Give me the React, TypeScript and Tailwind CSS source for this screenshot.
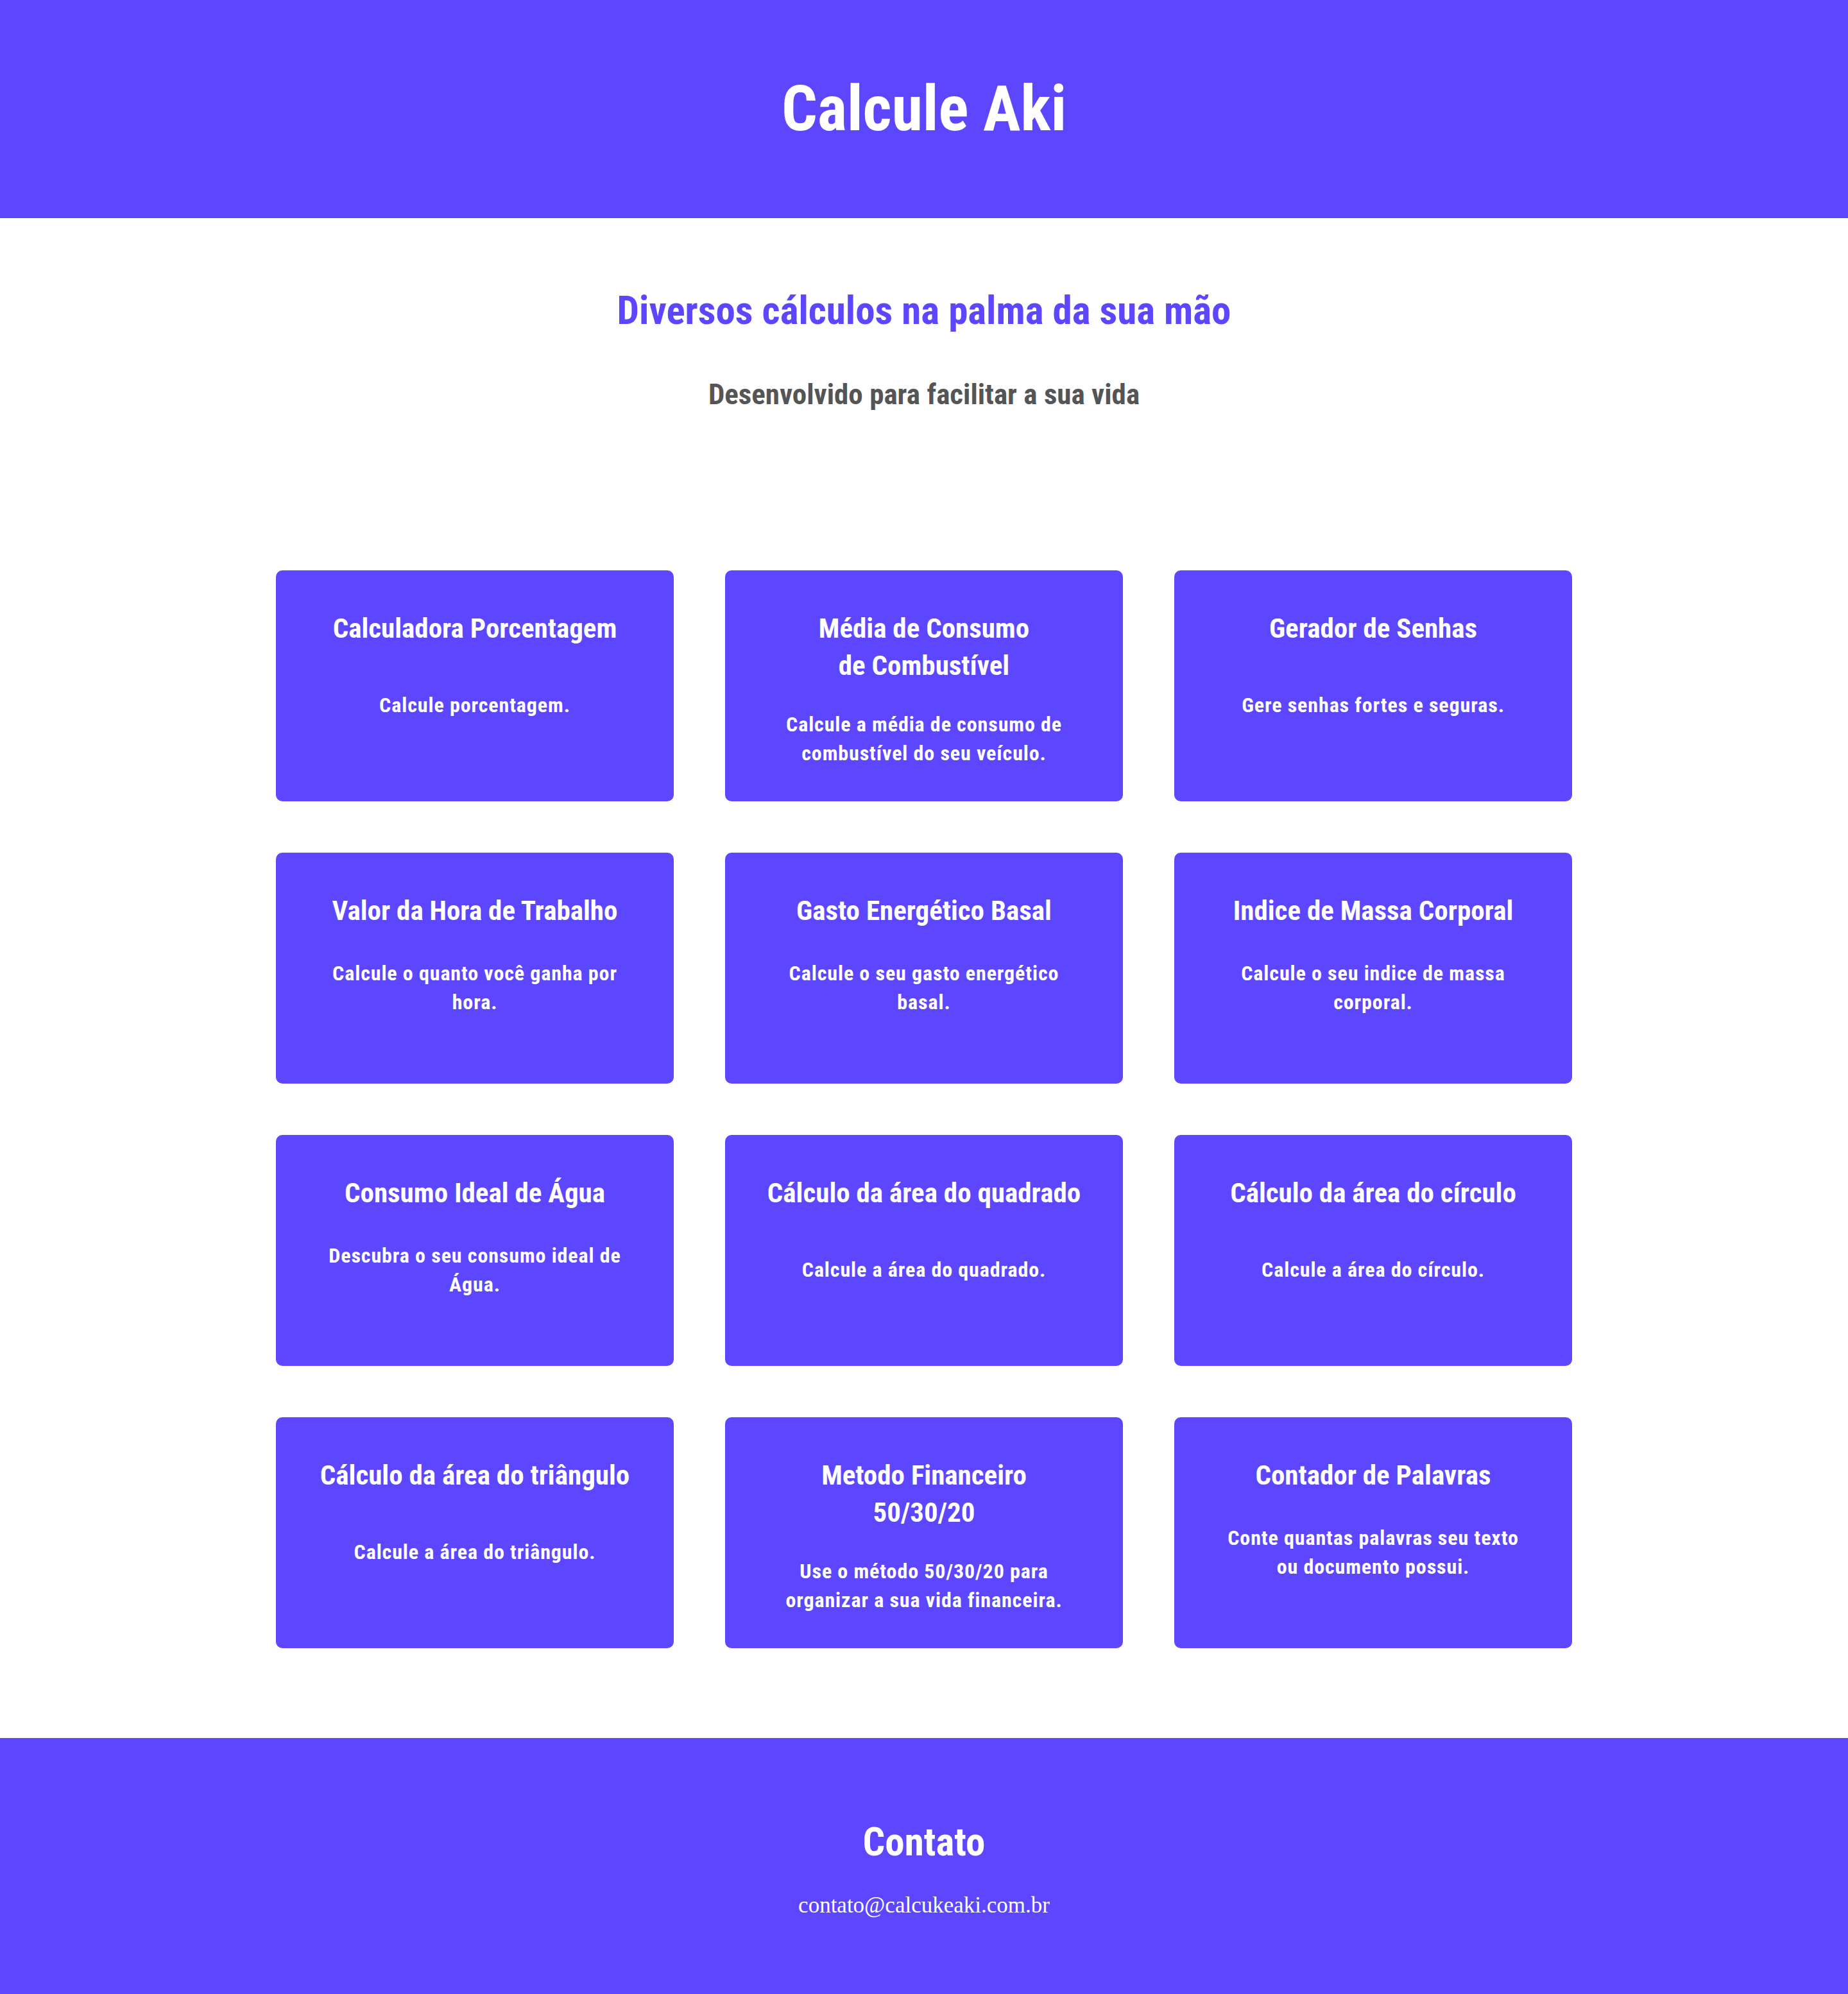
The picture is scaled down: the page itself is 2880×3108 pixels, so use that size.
const cards = [
  { title: ["Calculadora Porcentagem"], text: "Calcule porcentagem." },
  { title: ["Média de Consumo", "de Combustível"], text: "Calcule a média de consumo de combustível do seu veículo." },
  { title: ["Gerador de Senhas"], text: "Gere senhas fortes e seguras." },
  { title: ["Valor da Hora de Trabalho"], text: "Calcule o quanto você ganha por hora." },
  { title: ["Gasto Energético Basal"], text: "Calcule o seu gasto energético basal." },
  { title: ["Indice de Massa Corporal"], text: "Calcule o seu indice de massa corporal." },
  { title: ["Consumo Ideal de Água"], text: "Descubra o seu consumo ideal de Água." },
  { title: ["Cálculo da área do quadrado"], text: "Calcule a área do quadrado." },
  { title: ["Cálculo da área do círculo"], text: "Calcule a área do círculo." },
  { title: ["Cálculo da área do triângulo"], text: "Calcule a área do triângulo." },
  { title: ["Metodo Financeiro", "50/30/20"], text: "Use o método 50/30/20 para organizar a sua vida financeira." },
  { title: ["Contador de Palavras"], text: "Conte quantas palavras seu texto ou documento possui." },
];

function Card({ title, text }: { title: string[]; text: string }) {
  return (
    <a
      href="#"
      className="flex h-[360px] flex-col items-center rounded-[10px] bg-[#5d47fe] px-[30px] pt-[61px] text-center text-white"
    >
      <h2 className="text-[43px] leading-[58px] font-bold">
        {title.map((line, i) => (
          <span key={i} className="block">
            {line}
          </span>
        ))}
      </h2>
      {/* two-line titles push the text down a bit more */}
      <div
        className={`flex flex-1 items-center justify-center pb-[58px] ${
          title.length > 1 ? "pt-[41px]" : ""
        }`}
      >
        <p className="max-w-[490px] text-[32px] leading-[45px] font-bold tracking-[0.9px]">{text}</p>
      </div>
    </a>
  );
}

export default function App() {
  return (
    <div className="min-h-screen bg-white font-['Roboto_Condensed','Roboto',sans-serif] font-stretch-condensed">
      <header className="flex h-[340px] items-center justify-center bg-[#5d47fe]">
        <h1 className="text-[98px] leading-[1.2] font-bold text-white">Calcule Aki</h1>
      </header>

      <section className="flex flex-col items-center pt-[108px]">
        <h2 className="text-[61px] leading-[1.2] font-bold text-[#5d47fe]">
          Diversos cálculos na palma da sua mão
        </h2>
        <p className="mt-[67px] text-[45px] leading-[1.2] font-bold text-[#555555]">
          Desenvolvido para facilitar a sua vida
        </p>
      </section>

      <main className="mx-auto mt-[247px] grid w-[2020px] grid-cols-3 gap-[80px]">
        {cards.map((card, index) => (
          <Card key={index} title={card.title} text={card.text} />
        ))}
      </main>

      <footer className="mt-[140px] flex h-[400px] flex-col items-center bg-[#5d47fe] pt-[126px] text-white">
        <h2 className="text-[61px] leading-[1.2] font-bold">Contato</h2>
        <p className="mt-[41px] font-['Liberation_Serif',serif] text-[35px] leading-[1.2] font-stretch-normal">
          contato@calcukeaki.com.br
        </p>
      </footer>
    </div>
  );
}
